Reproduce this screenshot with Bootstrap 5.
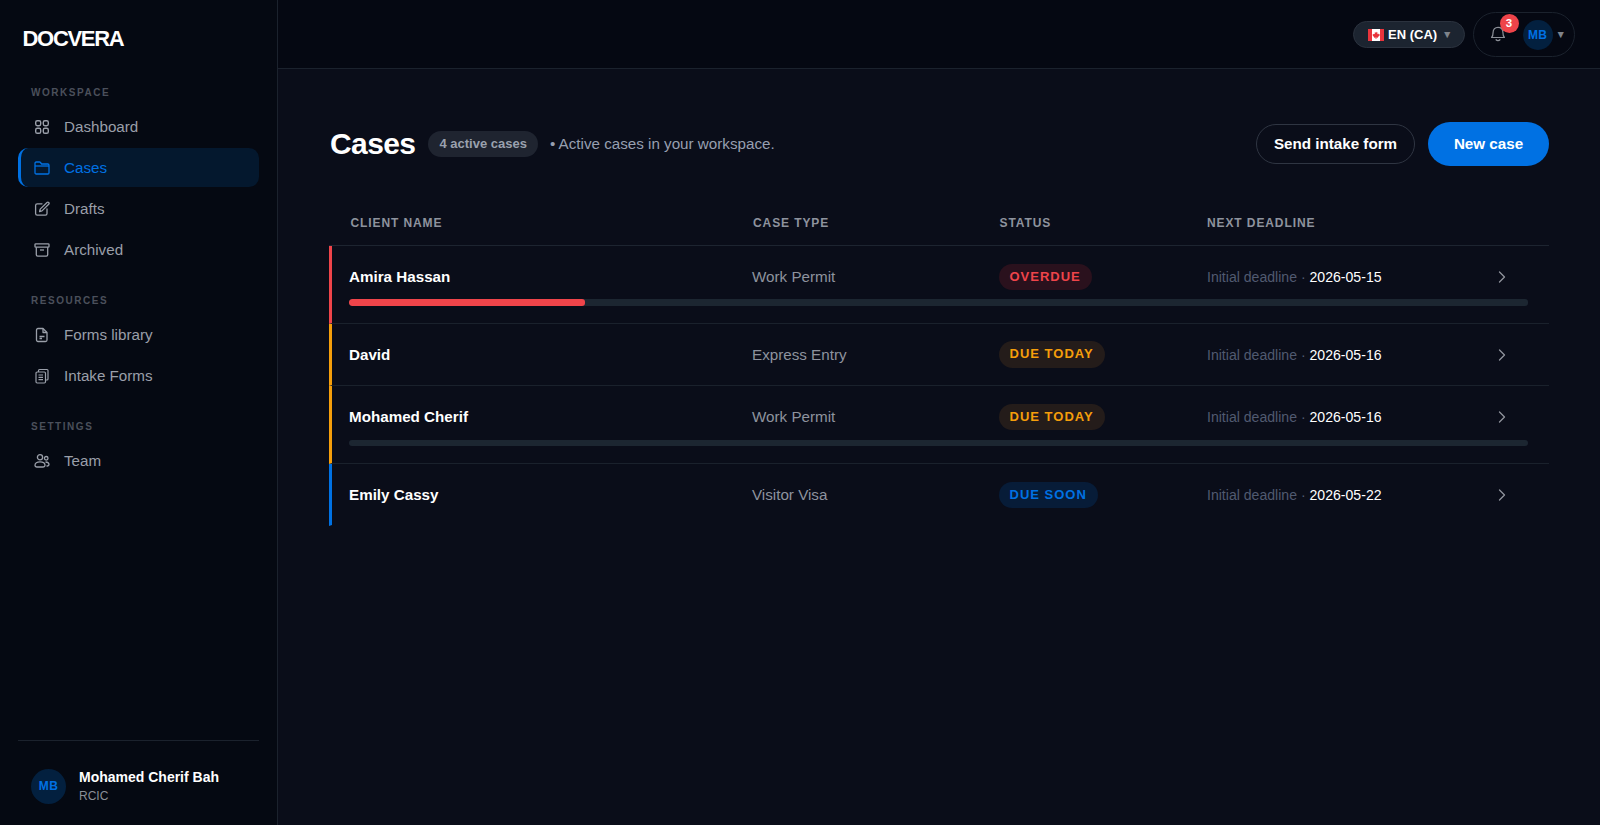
<!DOCTYPE html>
<html lang="en">
<head>
    <meta charset="UTF-8">
    <meta name="viewport" content="width=device-width, initial-scale=1.0">
    <title>Docvera - Cases</title>
    <link href="https://cdn.jsdelivr.net/npm/bootstrap@5.3.0/dist/css/bootstrap.min.css" rel="stylesheet">
    <style>
        body {
            font-family: "Liberation Sans", Arial, sans-serif;
            background-color: #0a0d19;
            color: #fff;
            overflow: hidden;
        }
        svg { flex-shrink: 0; display: block; }

        /* sidebar */
        .side-panel {
            width: 278px;
            background: #050912;
            border-right: 1px solid #1b222d;
            padding: 25px 18px 20.5px;
        }
        .brand-name {
            font-size: 22px;
            font-weight: 700;
            letter-spacing: -1.3px;
            line-height: 28px;
            padding-left: 4.5px;
            margin-bottom: 34px;
        }
        .side-label {
            font-size: 10px;
            font-weight: 700;
            letter-spacing: 1.55px;
            color: #4b505b;
            line-height: 12px;
            padding-left: 13px;
            margin-bottom: 8px;
        }
        .side-group { margin-bottom: 24px; }
        .side-link {
            display: flex;
            align-items: center;
            gap: 14px;
            height: 39px;
            padding: 1px 0 0 13px;
            margin-bottom: 2px;
            font-size: 15.2px;
            color: #9a9fa9;
            border-radius: 10px;
            text-decoration: none;
            border-left: 3px solid transparent;
        }
        .side-link svg { width: 16px; height: 16px; margin-top: -1px; }
        .side-link.is-active {
            color: #0071e3;
            background: #04182e;
            border-left-color: #0071e3;
        }
        .side-foot {
            border-top: 1px solid #1b222d;
            padding: 27px 0 0 13px;
            gap: 13px;
        }
        .avatar-dot {
            display: flex;
            align-items: center;
            justify-content: center;
            border-radius: 50%;
            background: #03203f;
            color: #0071e3;
            font-weight: 700;
            font-size: 12px;
            letter-spacing: .3px;
            flex-shrink: 0;
        }
        .avatar-lg { width: 35px; height: 35px; }
        .avatar-sm { width: 30px; height: 30px; }
        .foot-text { margin-bottom: 2px; }
        .foot-name { font-size: 14px; font-weight: 700; line-height: 18px; }
        .foot-role { font-size: 12px; color: #8b8f98; line-height: 14px; margin-top: 3px; }

        /* top bar */
        .top-strip {
            height: 69px;
            flex: none;
            background: #050812;
            border-bottom: 1px solid #1b222d;
            padding: 12px 25px 0 0;
        }
        .lang-pill {
            width: 112px;
            height: 27px;
            margin-top: 9px;
            padding-left: 14px;
            border: 1px solid #2b323e;
            background: #1c2430;
            font-size: 13px;
            font-weight: 700;
            gap: 4px;
        }
        .caret-mark { color: #7f838b; font-size: 10.5px; line-height: 1; }
        .lang-pill .caret-mark { margin-left: 1px; }
        .user-pill {
            position: relative;
            width: 102px;
            height: 45px;
            margin-left: 8px;
            border: 1px solid #1b222d;
            padding-left: 15px;
        }
        .user-pill > svg { width: 18px; height: 18px; margin-top: -4px; }
        .user-pill .caret-mark { margin: 0 8px 0 3px; }
        .count-dot {
            position: absolute;
            top: 1px;
            left: 25.5px;
            width: 19px;
            height: 19px;
            border-radius: 50%;
            background: #ef444a;
            color: #fff;
            font-size: 11.5px;
            font-weight: 700;
            display: flex;
            align-items: center;
            justify-content: center;
        }

        /* page */
        .page-body { padding: 53px 51px 0 51px; }
        .page-title {
            font-size: 30px;
            font-weight: 700;
            letter-spacing: -0.6px;
            margin: 0 0 0 1px;
            line-height: 36px;
        }
        .count-chip {
            background: #1f2430;
            color: #9aa1ae;
            font-size: 13px;
            font-weight: 700;
            height: 26px;
            padding: 0 11px;
            margin-left: 13px;
            display: flex;
            align-items: center;
        }
        .page-note { font-size: 15.2px; color: #979fb0; margin: 0 0 0 12px; }
        .ghost-btn, .main-btn {
            font-size: 15.2px;
            font-weight: 700;
            color: #fff;
            display: flex;
            align-items: center;
            justify-content: center;
            padding: 0;
        }
        .ghost-btn { width: 159px; height: 40.5px; border: 1px solid #2f3542; background: transparent; }
        .main-btn { width: 121px; height: 44px; background: #0071e3; border: 0; margin-left: 13px; }

        .case-cols {
            display: grid;
            grid-template-columns: 403px 246.5px 208.5px 1fr 53.5px;
            align-items: center;
        }
        .head-row {
            margin-top: 41px;
            height: 39px;
            padding-left: 21.5px;
            padding-bottom: 6px;
            border-bottom: 1px solid #1d2430;
            font-size: 12px;
            font-weight: 700;
            letter-spacing: .9px;
            color: #8e939e;
            grid-template-columns: 402.5px 246.5px 207.5px 1fr;
        }
        .case-row {
            border-left: 3px solid;
            border-bottom: 1px solid #1a212c;
            padding: 17.6px 0 17.15px 17px;
        }
        .case-row:last-child { border-bottom-color: transparent; }
        .stripe-red { border-left-color: #ef444a; }
        .stripe-amber { border-left-color: #f59e0b; }
        .stripe-blue { border-left-color: #0071e3; }
        .client-name, .case-type, .due-line { padding-top: 1.5px; }
        .client-name { font-size: 15.2px; font-weight: 700; }
        .case-type { font-size: 15.2px; color: #8e939e; }
        .state-chip {
            display: inline-flex;
            align-items: center;
            height: 26.6px;
            padding: 0 11px 1px;
            border-radius: 14px;
            font-size: 13px;
            font-weight: 700;
            letter-spacing: 1px;
        }
        .state-red { background: #2a111d; color: #ef444a; }
        .state-amber { background: #241c1a; color: #f59e0b; }
        .state-blue { background: #071c38; color: #0071e3; }
        .due-line { font-size: 14.08px; color: #515a70; }
        .due-line b { font-weight: 400; color: #fff; }
        .case-bar {
            height: 6.3px;
            margin: 9.2px 21px 0 0;
            background: #1c2631;
            border-radius: 3px;
        }
        .case-bar .progress-bar { background: #ef444a; border-radius: 3px; }
        .go-mark { width: 12px; height: 12px; color: #90949c; }
    </style>
</head>
<body class="d-flex vh-100">
    <aside class="side-panel d-flex flex-column flex-shrink-0">
        <div class="brand-name">DOCVERA</div>

        <div class="side-group">
            <div class="side-label">WORKSPACE</div>
            <nav class="nav flex-column">
                <a class="side-link" href="#">
                    <svg viewBox="0 0 16 16" fill="none" stroke="currentColor" stroke-width="1.4"><rect x="1.700" y="1.700" width="5" height="5" rx="1.600"/><rect x="9.300" y="1.700" width="5" height="5" rx="1.600"/><rect x="1.700" y="9.300" width="5" height="5" rx="1.600"/><rect x="9.300" y="9.300" width="5" height="5" rx="1.600"/></svg>
                    Dashboard
                </a>
                <a class="side-link is-active" href="#">
                    <svg viewBox="0 0 16 16" fill="none" stroke="currentColor" stroke-width="1.3"><path d="M1 4V3.200C1 2.500 1.500 2 2.200 2h3.300c.4 0 .7.200 1 .5L7.600 4H13.800c.7 0 1.200.5 1.200 1.200v7.600c0 .7-.5 1.200-1.200 1.200H2.200C1.500 14 1 13.500 1 12.800V4Z"/><path d="M1 6h14"/></svg>
                    Cases
                </a>
                <a class="side-link" href="#">
                    <svg viewBox="0 0 16 16" fill="none" stroke="currentColor" stroke-width="1.3" stroke-linejoin="round" stroke-linecap="round"><path d="M8 2.800H3.200c-.9 0-1.600.7-1.600 1.600v8.200c0 .9.700 1.600 1.600 1.600h8.200c.9 0 1.600-.7 1.600-1.600V8"/><path d="M13 1.500a1.200 1.200 0 0 1 1.700 1.700L8 9.900l-2.400.6.600-2.400L13 1.500Z"/></svg>
                    Drafts
                </a>
                <a class="side-link" href="#">
                    <svg viewBox="0 0 16 16" fill="none" stroke="currentColor" stroke-width="1.3" stroke-linejoin="round"><rect x="1" y="1.800" width="14" height="3.400" rx=".8"/><path d="M2.300 5.200v7.600c0 .8.600 1.400 1.400 1.400h8.600c.8 0 1.400-.6 1.400-1.400V5.200"/><path d="M6 8h4"/></svg>
                    Archived
                </a>
            </nav>
        </div>

        <div class="side-group">
            <div class="side-label">RESOURCES</div>
            <nav class="nav flex-column">
                <a class="side-link" href="#">
                    <svg viewBox="0 0 16 16" fill="none" stroke="currentColor" stroke-width="1.3" stroke-linejoin="round"><path d="M4 1.500h5l4 4v7.500c0 .8-.7 1.500-1.500 1.500h-7.500C3.200 14.500 2.500 13.800 2.500 13V3c0-.8.700-1.500 1.500-1.500Z"/><path d="M9 1.500V5.500h4"/><path d="M5.500 9.500h5M5.500 11.500h2.500"/></svg>
                    Forms library
                </a>
                <a class="side-link" href="#">
                    <svg viewBox="0 0 16 16" fill="none" stroke="currentColor" stroke-width="1.200" stroke-linejoin="round"><rect x="2" y="4" width="9.500" height="11" rx="1.200"/><path d="M4.500 4V2.500c0-.6.500-1 1-1H13c.6 0 1 .400 1 1V11c0 .6-.4 1-1 1h-1.500"/><path d="M4.500 7h4.500M4.500 9.300h4.500M4.500 11.600h4.500"/></svg>
                    Intake Forms
                </a>
            </nav>
        </div>

        <div class="side-group">
            <div class="side-label">SETTINGS</div>
            <nav class="nav flex-column">
                <a class="side-link" href="#">
                    <svg viewBox="0 0 16 16" fill="none" stroke="currentColor" stroke-width="1.300"><circle cx="6" cy="4.300" r="2.600"/><path d="M1 12.300C1 10 3 8.800 6 8.800s5 1.200 5 3.500c0 1-.8 1.700-1.800 1.700H2.800C1.800 14 1 13.300 1 12.300Z"/><circle cx="12.200" cy="5.300" r="1.800"/><path d="M11.500 9c2 .100 3.500 1 3.500 2.600 0 .9-.6 1.400-1.500 1.400h-1"/></svg>
                    Team
                </a>
            </nav>
        </div>

        <div class="side-foot mt-auto d-flex align-items-center">
            <div class="avatar-dot avatar-lg">MB</div>
            <div class="foot-text">
                <div class="foot-name">Mohamed Cherif Bah</div>
                <div class="foot-role">RCIC</div>
            </div>
        </div>
    </aside>

    <div class="flex-grow-1 d-flex flex-column">
        <header class="top-strip d-flex justify-content-end align-items-start">
            <div class="lang-pill rounded-pill d-flex align-items-center">
                <svg width="16" height="12" viewBox="0 0 16 12"><rect width="16" height="12" rx="1" fill="#fff"/><rect width="4" height="12" fill="#e8343c"/><rect x="12" width="4" height="12" fill="#e8343c"/><path d="M8 2.200l.8 1.500.8-.4-.3 2 1-.8.300.7 1.100-.2-.4 1.200.5.300-1.900 1.500.2.800-1.700-.2v1.400h-.8V8.600l-1.700.2.200-.8L4.500 6.500l.5-.3-.4-1.200 1.100.2.300-.7 1 .8-.3-2 .8.4.8-1.500Z" fill="#e8343c"/></svg>
                EN (CA)
                <span class="caret-mark">▼</span>
            </div>
            <div class="user-pill rounded-pill d-flex align-items-center">
                <svg viewBox="0 0 16 16" fill="none" stroke="#8c9098" stroke-width="1.100" stroke-linejoin="round" stroke-linecap="round"><path d="M2.300 12c.8-.9 1.300-1.600 1.300-4.300C3.600 4.800 5.500 3 8 3s4.400 1.800 4.400 4.700c0 2.700.5 3.400 1.300 4.300H2.300Z"/><path d="M6.300 14c.4.500 1 .8 1.700.8s1.300-.3 1.700-.8"/></svg>
                <span class="count-dot">3</span>
                <div class="avatar-dot avatar-sm ms-auto">MB</div>
                <span class="caret-mark">▼</span>
            </div>
        </header>

        <main class="page-body flex-grow-1">
            <div class="d-flex align-items-center">
                <h1 class="page-title">Cases</h1>
                <span class="count-chip rounded-pill">4 active cases</span>
                <span class="page-note">• Active cases in your workspace.</span>
                <button class="btn ghost-btn rounded-pill ms-auto">Send intake form</button>
                <button class="btn main-btn rounded-pill">New case</button>
            </div>

            <div class="case-cols head-row">
                <div>CLIENT NAME</div>
                <div>CASE TYPE</div>
                <div>STATUS</div>
                <div>NEXT DEADLINE</div>
            </div>

            <div class="case-row stripe-red">
                <div class="case-cols">
                    <div class="client-name">Amira Hassan</div>
                    <div class="case-type">Work Permit</div>
                    <div class="d-flex"><span class="state-chip state-red">OVERDUE</span></div>
                    <div class="due-line">Initial deadline · <b>2026-05-15</b></div>
                    <svg class="go-mark" viewBox="0 0 12 12" fill="none" stroke="currentColor" stroke-width="1.300" stroke-linecap="round" stroke-linejoin="round"><path d="M3.500 1l5 5-5 5"/></svg>
                </div>
                <div class="progress case-bar"><div class="progress-bar" style="width: 20%"></div></div>
            </div>
            <div class="case-row stripe-amber">
                <div class="case-cols">
                    <div class="client-name">David</div>
                    <div class="case-type">Express Entry</div>
                    <div class="d-flex"><span class="state-chip state-amber">DUE TODAY</span></div>
                    <div class="due-line">Initial deadline · <b>2026-05-16</b></div>
                    <svg class="go-mark" viewBox="0 0 12 12" fill="none" stroke="currentColor" stroke-width="1.300" stroke-linecap="round" stroke-linejoin="round"><path d="M3.500 1l5 5-5 5"/></svg>
                </div>
            </div>
            <div class="case-row stripe-amber">
                <div class="case-cols">
                    <div class="client-name">Mohamed Cherif</div>
                    <div class="case-type">Work Permit</div>
                    <div class="d-flex"><span class="state-chip state-amber">DUE TODAY</span></div>
                    <div class="due-line">Initial deadline · <b>2026-05-16</b></div>
                    <svg class="go-mark" viewBox="0 0 12 12" fill="none" stroke="currentColor" stroke-width="1.300" stroke-linecap="round" stroke-linejoin="round"><path d="M3.500 1l5 5-5 5"/></svg>
                </div>
                <div class="progress case-bar"><div class="progress-bar" style="width: 0%"></div></div>
            </div>
            <div class="case-row stripe-blue">
                <div class="case-cols">
                    <div class="client-name">Emily Cassy</div>
                    <div class="case-type">Visitor Visa</div>
                    <div class="d-flex"><span class="state-chip state-blue">DUE SOON</span></div>
                    <div class="due-line">Initial deadline · <b>2026-05-22</b></div>
                    <svg class="go-mark" viewBox="0 0 12 12" fill="none" stroke="currentColor" stroke-width="1.300" stroke-linecap="round" stroke-linejoin="round"><path d="M3.500 1l5 5-5 5"/></svg>
                </div>
            </div>
        </main>
    </div>

    <script src="https://cdn.jsdelivr.net/npm/bootstrap@5.3.0/dist/js/bootstrap.bundle.min.js"></script>
</body>
</html>
